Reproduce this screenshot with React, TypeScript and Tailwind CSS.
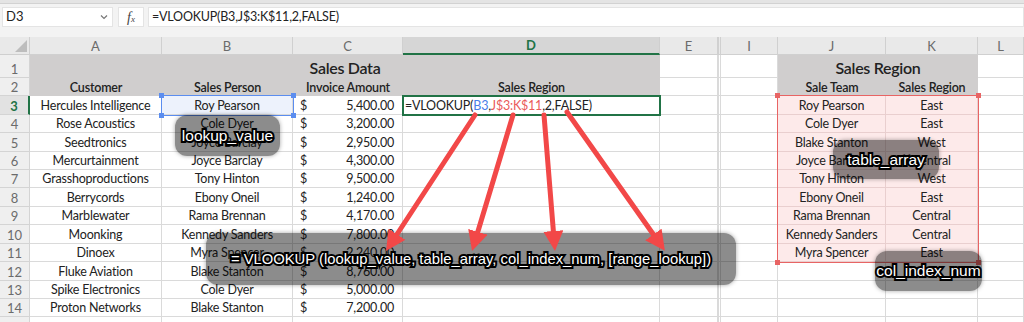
import React from "react";

const ROWS: { a: string; b: string; amt: string; j?: string; k?: string }[] = [
  { a: "Hercules Intelligence", b: "Roy Pearson", amt: "5,400.00", j: "Roy Pearson", k: "East" },
  { a: "Rose Acoustics", b: "Cole Dyer", amt: "3,200.00", j: "Cole Dyer", k: "East" },
  { a: "Seedtronics", b: "Joyce Barclay", amt: "2,950.00", j: "Blake Stanton", k: "West" },
  { a: "Mercurtainment", b: "Joyce Barclay", amt: "4,300.00", j: "Joyce Barclay", k: "Central" },
  { a: "Grasshoproductions", b: "Tony Hinton", amt: "9,500.00", j: "Tony Hinton", k: "West" },
  { a: "Berrycords", b: "Ebony Oneil", amt: "1,240.00", j: "Ebony Oneil", k: "East" },
  { a: "Marblewater", b: "Rama Brennan", amt: "4,170.00", j: "Rama Brennan", k: "Central" },
  { a: "Moonking", b: "Kennedy Sanders", amt: "7,800.00", j: "Kennedy Sanders", k: "Central" },
  { a: "Dinoex", b: "Myra Spencer", amt: "2,240.00", j: "Myra Spencer", k: "East" },
  { a: "Fluke Aviation", b: "Blake Stanton", amt: "8,760.00" },
  { a: "Spike Electronics", b: "Cole Dyer", amt: "5,000.00" },
  { a: "Proton Networks", b: "Blake Stanton", amt: "7,200.00" },
];

const HEADS = ["A", "B", "C", "D", "E", "I", "J", "K", "L"];

const base = "border-r border-b border-[#dadada] flex items-end leading-[16px] whitespace-nowrap overflow-hidden text-[12.5px] tracking-[-0.2px]";
const cell = `${base} justify-center`;
const sep = `${base} border-l-[3px] border-double`;
const gray = "bg-[#d0cece] flex items-end justify-center whitespace-nowrap";
const pink = "border-r border-b border-[#e9cfcf] bg-[#fdeaea] flex items-end leading-[16px] justify-center text-[12.5px] tracking-[-0.2px] whitespace-nowrap";
const rowHead = "bg-[#efefef] border-r border-b border-[#d4d4d4] flex items-end leading-[16px] justify-center text-[13px] text-[#6b6b6b]";
const colHead = "bg-[#e9e9e9] border-r border-b border-[#d0d0d0] flex items-center justify-center pt-[2px] text-[13px] text-[#6b6b6b]";
const hdr = "text-[12.5px] tracking-[-0.2px] leading-[16px] font-semibold";

const outline =
  "text-white font-['Liberation_Sans',Arial,sans-serif] [-webkit-text-stroke:4px_#000] [paint-order:stroke_fill] [text-shadow:0_0_2px_rgba(0,0,0,0.6)]";
const bubble = "absolute bg-black/45 rounded-[12px] flex items-center justify-center shadow-[0_0_4px_rgba(0,0,0,0.35)]";

export default function App() {
  return (
    <div className="relative w-[1024px] h-[322px] overflow-hidden bg-white font-['Lato',sans-serif] text-[#222]">
      {/* ribbon edge */}
      <div className="h-[4px] bg-[#e4e4e4] border-b border-[#d2d2d2]" />
      {/* formula bar */}
      <div className="h-[33px] bg-[#f3f3f3] flex items-start pt-[3px] pl-[2px]">
        <div className="w-[111px] h-[20px] bg-white border border-[#e4e4e4] flex items-center justify-between pl-[3px] pr-[4px] text-[13px]">
          <span>D3</span>
          <svg width="8" height="6" viewBox="0 0 8 6"><path d="M1 1.5 L4 4.5 L7 1.5" fill="none" stroke="#777" strokeWidth="1.2" /></svg>
        </div>
        <div className="ml-[5px] w-[26px] h-[20px] bg-white border border-[#e4e4e4] flex items-center justify-center font-['Liberation_Serif',serif] italic text-[14px] text-[#444]">
          <span>f</span>
          <span className="text-[9px] leading-none mt-[5px]">x</span>
        </div>
        <div className="ml-[4px] flex-1 h-[20px] bg-white border border-[#e4e4e4] flex items-center pl-[3px] text-[12.5px] tracking-[-0.2px]">
          =VLOOKUP(B3,J$3:K$11,2,FALSE)
        </div>
      </div>

      {/* sheet grid */}
      <div className="grid grid-cols-[30px_132px_131px_110px_257px_58px_60px_108px_92px_46px] grid-rows-[18px_23px_18px_19px_18px_19px_18px_18px_19px_18px_19px_18px_19px_18px_18px_20px]">
        {/* column headers */}
        <div className="bg-[#e9e9e9] border-r border-b border-[#cfcfcf] flex items-end justify-end p-[2px]">
          <svg width="12" height="12" viewBox="0 0 12 12"><polygon points="12,0 12,12 0,12" fill="#bdbdbd" /></svg>
        </div>
        {HEADS.map((h) =>
          h === "D" ? (
            <div key={h} className="bg-[#d6d6d6] border-r border-[#cfcfcf] border-b-2 border-b-[#217346] flex items-center justify-center pt-[2px] text-[13px] font-bold text-[#217346]">
              {h}
            </div>
          ) : h === "I" ? (
            <div key={h} className={`${colHead} border-l-[3px] border-double`}>
              {h}
            </div>
          ) : (
            <div key={h} className={colHead}>
              {h}
            </div>
          )
        )}

        {/* row 1 */}
        <div className={rowHead}>1</div>
        <div className={`${gray} col-span-4 text-[16px] tracking-[-0.3px] leading-[21px] font-semibold`}>Sales Data</div>
        <div className={cell} />
        <div className={sep} />
        <div className={`${gray} col-span-2 text-[16px] tracking-[-0.3px] leading-[21px] font-semibold`}>Sales Region</div>
        <div className={cell} />

        {/* row 2 */}
        <div className={rowHead}>2</div>
        <div className={`${gray} ${hdr}`}>Customer</div>
        <div className={`${gray} ${hdr}`}>Sales Person</div>
        <div className={`${gray} ${hdr}`}>Invoice Amount</div>
        <div className={`${gray} ${hdr}`}>Sales Region</div>
        <div className={cell} />
        <div className={sep} />
        <div className={`${gray} ${hdr}`}>Sale Team</div>
        <div className={`${gray} ${hdr}`}>Sales Region</div>
        <div className={cell} />

        {/* data rows */}
        {ROWS.map((r, i) => {
          const n = i + 3;
          return (
            <React.Fragment key={n}>
              <div
                className={
                  n === 3
                    ? "bg-[#e2e2e2] border-b border-[#d4d4d4] border-r-2 border-r-[#217346] flex items-end leading-[16px] justify-center text-[13px] font-bold text-[#217346]"
                    : rowHead
                }
              >
                {n}
              </div>
              <div className={cell}>{r.a}</div>
              <div className={`${cell} ${n === 3 ? "bg-[#edf2fc]" : ""}`}>{r.b}</div>
              <div className={`${base} justify-between pl-[7px] pr-[8px]`}>
                <span>$</span>
                <span>{r.amt}</span>
              </div>
              <div className={`${base} justify-start pl-[2px]`}>
                {n === 3 && (
                  <span>
                    =VLOOKUP(<span className="text-[#4a7ee8]">B3</span>,<span className="text-[#ea5a5a]">J$3:K$11</span>,2,FALSE)
                  </span>
                )}
              </div>
              <div className={cell} />
              <div className={sep} />
              {r.j ? (
                <>
                  <div className={pink}>{r.j}</div>
                  <div className={pink}>{r.k}</div>
                </>
              ) : (
                <>
                  <div className={cell} />
                  <div className={cell} />
                </>
              )}
              <div className={cell} />
            </React.Fragment>
          );
        })}

        {/* row 15 (partially visible) */}
        <div className={rowHead} />
        {HEADS.map((h) => (
          <div key={h} className={h === "I" ? sep : cell} />
        ))}
      </div>

      {/* selection highlights */}
      <div className="absolute left-[161px] top-[95px] w-[133px] h-[21px] border-[1.5px] border-[#5b8def]">
        <div className="absolute -left-[3px] -top-[3px] w-[5px] h-[5px] bg-[#5b8def]" />
        <div className="absolute -right-[3px] -top-[3px] w-[5px] h-[5px] bg-[#5b8def]" />
        <div className="absolute -left-[3px] -bottom-[3px] w-[5px] h-[5px] bg-[#5b8def]" />
        <div className="absolute -right-[3px] -bottom-[3px] w-[5px] h-[5px] bg-[#5b8def]" />
      </div>
      <div className="absolute left-[402px] top-[95px] w-[259px] h-[21px] border-2 border-[#217346]" />
      <div className="absolute left-[777px] top-[95px] w-[202px] h-[168px] border-[1.5px] border-[#e86464]">
        <div className="absolute -left-[3px] -top-[3px] w-[5px] h-[5px] bg-[#e86464]" />
        <div className="absolute -right-[3px] -top-[3px] w-[5px] h-[5px] bg-[#e86464]" />
        <div className="absolute -left-[3px] -bottom-[3px] w-[5px] h-[5px] bg-[#e86464]" />
        <div className="absolute -right-[3px] -bottom-[3px] w-[5px] h-[5px] bg-[#e86464]" />
      </div>

      {/* annotation bubbles */}
      <div className={`${bubble} left-[175px] top-[115px] w-[105px] h-[41px]`}>
        <span className={`${outline} text-[15.5px]`}>lookup_value</span>
      </div>
      <div className={`${bubble} left-[833px] top-[140px] w-[106px] h-[39px]`}>
        <span className={`${outline} text-[15.5px]`}>table_array</span>
      </div>
      <div className={`${bubble} left-[206px] top-[233px] w-[530px] h-[52px]`}>
        <span className={`${outline} text-[14.8px]`}>= VLOOKUP (lookup_value, table_array, col_index_num, [range_lookup])</span>
      </div>
      <div className={`${bubble} left-[875px] top-[251px] w-[107px] h-[40px]`}>
        <span className={`${outline} text-[15.5px]`}>col_index_num</span>
      </div>

      {/* arrows */}
      <svg className="absolute left-0 top-0 pointer-events-none" width="1024" height="322" viewBox="0 0 1024 322">
        <defs>
          <marker id="ah" markerWidth="4" markerHeight="4" refX="1.6" refY="2" orient="auto" markerUnits="strokeWidth">
            <path d="M0,0 L4,2 L0,4 z" fill="#f24848" />
          </marker>
        </defs>
        <g stroke="#f24848" strokeWidth="5" strokeLinecap="round" fill="none">
          <line x1="475" y1="115" x2="392.6" y2="241" markerEnd="url(#ah)" />
          <line x1="513" y1="115" x2="475.5" y2="239.5" markerEnd="url(#ah)" />
          <line x1="544" y1="115" x2="554" y2="239" markerEnd="url(#ah)" />
          <line x1="567" y1="112" x2="658" y2="241" markerEnd="url(#ah)" />
        </g>
      </svg>
    </div>
  );
}
